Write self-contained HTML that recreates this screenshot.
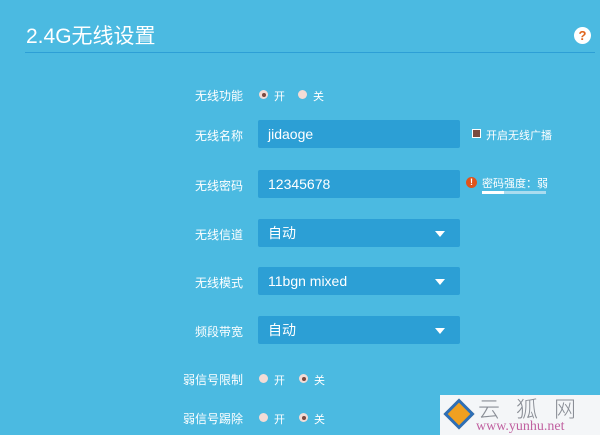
<!DOCTYPE html><html><head><meta charset="utf-8"><style>
html,body{margin:0;width:600px;height:435px;overflow:hidden}
body{background:#4bbae1;font-family:"Liberation Sans","Noto Sans CJK SC",sans-serif;color:#fff;position:relative}
.a{position:absolute;white-space:nowrap}
.lbl{position:absolute;right:357px;font-size:12px;white-space:nowrap}
.inp{position:absolute;left:258px;width:202px;height:28px;background:#2c9fd5;border-radius:2px;font-size:14px;line-height:28px;text-indent:10px}
.arr{position:absolute;right:15px;top:12px;border-left:5px solid transparent;border-right:5px solid transparent;border-top:6px solid #fff}
.r{position:absolute;width:9px;height:9px;border-radius:50%;background:#f3dcd6}
.r.on::after{content:"";position:absolute;left:2.5px;top:2.5px;width:4px;height:4px;border-radius:50%;background:#7a4a40}
.t{position:absolute;font-size:11px}
</style></head><body>
<div class="a" style="left:26px;top:20px;font-size:21px">2.4G无线设置</div>
<div class="a" style="left:25px;top:52px;width:570px;height:1px;background:#2d9fd6"></div>
<div class="a" style="left:574px;top:27px;width:17px;height:17px;border-radius:50%;background:#fff;color:#e0651c;font-weight:bold;font-size:13px;text-align:center;line-height:17px">?</div>

<div class="lbl" style="top:87px">无线功能</div>
<div class="r on" style="left:259px;top:90px"></div><div class="t" style="left:274px;top:88px">开</div>
<div class="r" style="left:298px;top:90px"></div><div class="t" style="left:313px;top:88px">关</div>

<div class="lbl" style="top:127px">无线名称</div>
<div class="inp" style="top:120px">jidaoge</div>
<div class="a" style="left:472px;top:129px;width:9px;height:9px;background:#fff"><div style="position:absolute;left:1px;top:1px;width:7px;height:7px;background:#7a4a40"></div></div>
<div class="t" style="left:486px;top:127px">开启无线广播</div>

<div class="lbl" style="top:177px">无线密码</div>
<div class="inp" style="top:170px">12345678</div>
<div class="a" style="left:466px;top:177px;width:11px;height:11px;border-radius:50%;background:#e0541c;font-size:9px;text-align:center;line-height:11px;font-weight:bold">!</div>
<div class="t" style="left:482px;top:175px">密码强度：弱</div>
<div class="a" style="left:482px;top:191px;width:64px;height:3px;background:#a9dcef"><div style="width:22px;height:3px;background:#fff"></div></div>

<div class="lbl" style="top:226px">无线信道</div>
<div class="inp" style="top:219px">自动<div class="arr"></div></div>
<div class="lbl" style="top:274px">无线模式</div>
<div class="inp" style="top:267px">11bgn mixed<div class="arr"></div></div>
<div class="lbl" style="top:323px">频段带宽</div>
<div class="inp" style="top:316px">自动<div class="arr"></div></div>

<div class="lbl" style="top:371px">弱信号限制</div>
<div class="r" style="left:259px;top:374px"></div><div class="t" style="left:274px;top:372px">开</div>
<div class="r on" style="left:299px;top:374px"></div><div class="t" style="left:314px;top:372px">关</div>
<div class="lbl" style="top:410px">弱信号踢除</div>
<div class="r" style="left:259px;top:413px"></div><div class="t" style="left:274px;top:411px">开</div>
<div class="r on" style="left:299px;top:413px"></div><div class="t" style="left:314px;top:411px">关</div>

<div class="a" style="left:440px;top:395px;width:160px;height:40px;background:#f4f6f8"></div>
<div class="a" style="left:448px;top:403px;width:16px;height:16px;transform:rotate(45deg);border:3px solid #2d6fb8;background:#f0a020"></div>
<div class="a" style="left:478px;top:396px;font-size:22px;line-height:24px;color:#8a8e96;letter-spacing:16px;font-family:'Noto Sans CJK SC',sans-serif;font-weight:300">云狐网</div>
<div class="a" style="left:476px;top:419px;font-size:14px;line-height:15px;color:#c060a0;font-family:'Liberation Serif',serif">www.yunhu.net</div>
</body></html>
